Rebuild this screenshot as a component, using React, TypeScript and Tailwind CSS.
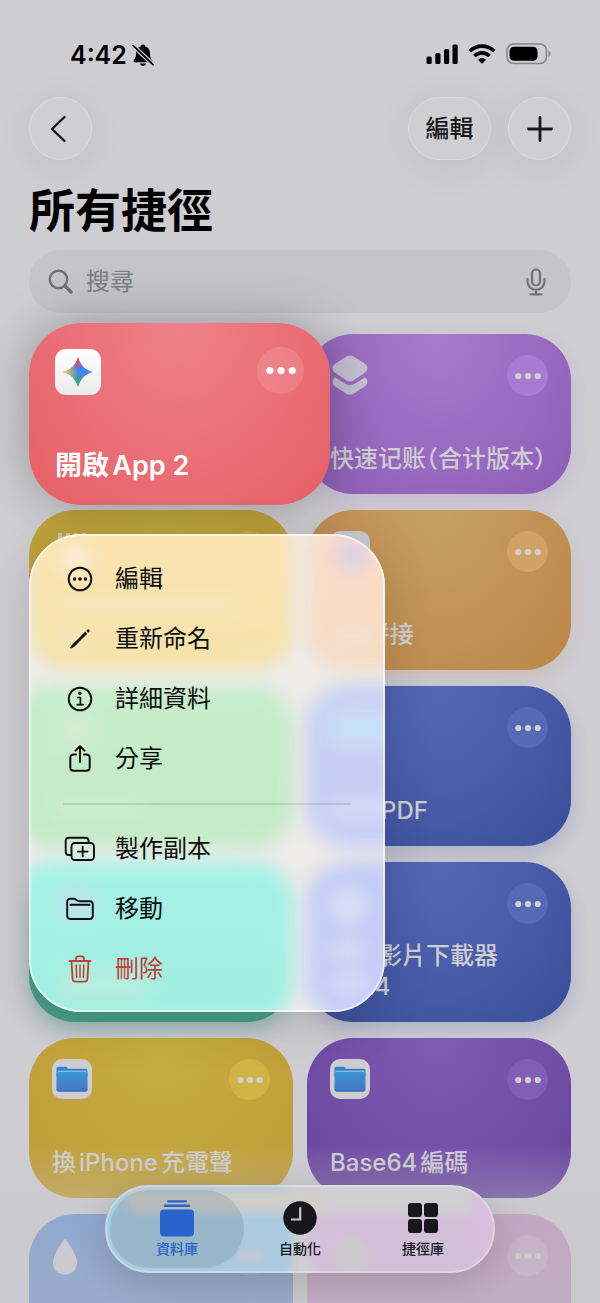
import type { ReactNode } from 'react';
import clsx from 'clsx';

type Shortcut = {
  id: string;
  title?: string;
  lang?: string;
  tone: string;
  more?: string;
  icon?: ReactNode;
};

type MenuItem = { label: string; icon: ReactNode; danger?: boolean };

const shortcuts: Shortcut[] = [
  {
    id: 'ledger',
    title: '快速记账（合计版本）',
    lang: 'zh-Hans',
    tone: 'bg-[radial-gradient(ellipse_at_top,#a67bcd,#9769bf_60%,#8b5cb4)] shadow-[0_8px_18px_rgba(151,105,191,0.16)]',
    more: 'bg-[#a87bd0]',
    icon: <LayersGlyph />,
  },
  {
    id: 'grid',
    tone: 'bg-[radial-gradient(ellipse_at_top,#c2ab3f,#bf9e38)]',
    more: 'bg-[#cdb044]',
    icon: <DotsGridGlyph />,
  },
  {
    id: 'stitch',
    title: 'A4拼接',
    tone: 'bg-[radial-gradient(ellipse_at_top,#c6a161,#c09055_60%,#bb8547)] shadow-[0_8px_18px_rgba(187,133,71,0.16)]',
    more: 'bg-[#cfa265]',
    icon: <span className="block size-10 rounded-[10px] bg-[#c9c8ce]" />,
  },
  { id: 'green', tone: 'bg-[#7bb07c]' },
  {
    id: 'pdf',
    title: '製作PDF',
    tone: 'bg-[radial-gradient(ellipse_at_top,#5468b5,#4559a6_60%,#3a4c98)] shadow-[0_8px_18px_rgba(58,76,152,0.2)]',
    more: 'bg-[#5569b5]',
  },
  { id: 'teal', tone: 'bg-[#489d88] shadow-[0_8px_18px_rgba(72,157,136,0.4)]' },
  {
    id: 'video',
    title: '下載影片下載器 Ver.4',
    tone: 'bg-[radial-gradient(ellipse_at_top,#5468b5,#4559a6_60%,#3a4c98)] shadow-[0_8px_18px_rgba(58,76,152,0.2)]',
    more: 'bg-[#5569b5]',
  },
  {
    id: 'charge',
    title: '換iPhone充電聲',
    tone: 'bg-[radial-gradient(ellipse_at_top,#c4b040,#c2a53b_50%,#c09a36)]',
    more: 'bg-[#d1b245]',
    icon: <FolderTile id="a" />,
  },
  {
    id: 'base64',
    title: 'Base64編碼',
    tone: 'bg-[radial-gradient(ellipse_at_top,#7f5bb3,#7450a9_50%,#68459c)]',
    more: 'bg-[#815db5]',
    icon: <FolderTile id="b" />,
  },
  { id: 'water', tone: 'bg-[linear-gradient(#6e95d2,#7d9ccb_50%)]', more: 'bg-white/10', icon: <DropGlyph /> },
  { id: 'pink', tone: 'bg-[linear-gradient(#c293bd,#c0a0c0_50%)]', more: 'bg-white/15' },
];

const menuTop: MenuItem[] = [
  { label: '編輯', icon: <EllipsisCircleIcon /> },
  { label: '重新命名', icon: <PencilIcon /> },
  { label: '詳細資料', icon: <InfoIcon /> },
  { label: '分享', icon: <ShareIcon /> },
];

const menuBottom: MenuItem[] = [
  { label: '製作副本', icon: <DuplicateIcon /> },
  { label: '移動', icon: <FolderIcon /> },
  { label: '刪除', icon: <TrashIcon />, danger: true },
];

const tabs = [
  { label: '資料庫', icon: <LibraryIcon />, active: true },
  { label: '自動化', icon: <ClockIcon />, active: false },
  { label: '捷徑庫', icon: <GalleryIcon />, active: false },
];

export default function App() {
  return (
    <div
      lang="zh-Hant"
      className="relative h-screen overflow-hidden bg-[#cecdd2] text-black font-[Inter,'Noto_Sans_CJK_TC',sans-serif] [text-autospace:normal]"
    >
      <StatusBar />
      <main className="px-[29px]">
        <header className="flex items-center gap-[17px]">
          <GlassButton label="返回" className="w-[63px] mr-auto">
            <svg viewBox="0 0 28 28" className="size-7" fill="none" stroke="currentColor" strokeWidth="2.4" strokeLinecap="round" strokeLinejoin="round">
              <path d="M17.500 2 5 14l12.500 12" />
            </svg>
          </GlassButton>
          <GlassButton className="w-[83px] text-2xl font-medium">編輯</GlassButton>
          <GlassButton label="新增捷徑" className="w-[63px]">
            <svg viewBox="0 0 28 28" className="size-7" fill="none" stroke="currentColor" strokeWidth="2.8" strokeLinecap="round">
              <path d="M14 2.500v23M2.500 14h23" />
            </svg>
          </GlassButton>
        </header>

        <h1 className="mt-5 text-[46px] leading-[60px] font-bold">所有捷徑</h1>

        <label className="mt-[10px] flex h-[63px] items-center rounded-full bg-[#c5c4c9] px-[19px] text-[#707075]">
          <SearchIcon />
          <input
            type="text"
            aria-label="搜尋"
            placeholder="搜尋"
            className="ml-3 min-w-0 flex-1 bg-transparent text-2xl outline-none placeholder:text-[#7c7c81]"
          />
          <button type="button" aria-label="聽寫" className="w-8 flex justify-center">
            <MicIcon />
          </button>
        </label>

        <ul className="mt-[21px] grid grid-cols-2 gap-x-[14px] gap-y-4">
          <li className="relative z-10 h-40">
            <FocusedCard />
            <ContextMenu />
          </li>
          {shortcuts.map((s) => (
            <ShortcutCard key={s.id} shortcut={s} />
          ))}
        </ul>
      </main>

      <div className="pointer-events-none absolute inset-x-0 bottom-0 h-[160px] bg-linear-to-b from-[#cecdd2]/0 via-[#c6c5ca]/40 via-40% to-[#c2c2c9]/40" />
      <TabBar />
    </div>
  );
}

function StatusBar() {
  return (
    <div className="flex h-[97px] items-center justify-between pl-[70px] pr-[49px] pt-[13px]">
      <div className="flex h-[84px] items-start gap-[5px] pt-[26px]">
        <span className="text-[25px] leading-8 font-semibold">4:42</span>
        <svg viewBox="0 0 22 24" className="mt-1 h-6 w-[22px]">
          <path d="M11 1.500c1.300 0 2.200.8 2.400 1.900 3 .9 4.600 3.600 4.600 6.800 0 4.300 1 5.600 2.200 7 .8 1 .2 2-1 2H2.800c-1.200 0-1.800-1-1-2C3 15.800 4 14.500 4 10.200c0-3.200 1.600-5.900 4.600-6.800.2-1.100 1.100-1.900 2.400-1.900z" />
          <path d="M8 20.600h6c-.3 1.500-1.500 2.400-3 2.400s-2.700-.9-3-2.400z" />
          <path d="M0 1.500 22 22.500" stroke="#cecdd2" strokeWidth="4.200" />
          <path d="M1.200 2.600 21 21.600" stroke="#000" strokeWidth="1.800" strokeLinecap="round" />
        </svg>
      </div>
      <div className="flex h-[84px] items-start gap-[10px] pt-[30px]">
        <svg viewBox="0 0 32 22" className="h-[22px] w-8">
          <rect x="0.500" y="13.500" width="5.200" height="7.500" rx="1.500" />
          <rect x="9.300" y="10" width="5.200" height="11" rx="1.500" />
          <rect x="18" y="6" width="5.200" height="15" rx="1.500" />
          <rect x="26.500" y="1.500" width="5.200" height="19.500" rx="1.500" />
        </svg>
        <svg viewBox="0 0 28 22" className="h-[22px] w-7" fill="none" stroke="#000" strokeWidth="3.600">
          <path d="M1.800 8.200a17.300 17.300 0 0 1 24.400 0" />
          <path d="M6.400 13a10.800 10.800 0 0 1 15.200 0" />
          <path d="M14 20.800l-4-4.100a5.700 5.700 0 0 1 8 0z" fill="#000" stroke="none" />
        </svg>
        <svg viewBox="0 0 45 22" className="h-[22px] w-[45px]">
          <rect x="1" y="1" width="39.500" height="19.500" rx="6.500" fill="none" stroke="#87868a" strokeWidth="1.600" />
          <rect x="3.500" y="3.700" width="28" height="14" rx="4.500" />
          <path d="M42.500 7.500c1.300.5 2 1.700 2 3.300s-.7 2.800-2 3.300z" fill="#87868a" />
        </svg>
      </div>
    </div>
  );
}

function GlassButton({ label, className, children }: { label?: string; className?: string; children: ReactNode }) {
  return (
    <button
      type="button"
      aria-label={label}
      className={clsx(
        'flex h-[63px] items-center justify-center rounded-full border border-[#dcdcdf] bg-[#cfcfd1] text-[#18181b] shadow-[0_6px_40px_rgba(0,0,0,0.07)]',
        className,
      )}
    >
      {children}
    </button>
  );
}

function ShortcutCard({ shortcut }: { shortcut: Shortcut }) {
  return (
    <li className={clsx('flex h-40 flex-col justify-between rounded-[46px] px-[23px] pt-[21px] pb-5', shortcut.tone)}>
      <div className="flex items-start justify-between">
        <div className="flex size-10 items-center justify-center">{shortcut.icon}</div>
        <button
          type="button"
          aria-label="更多"
          className={clsx('flex size-[41px] items-center justify-center rounded-full', shortcut.more)}
        >
          <MoreDots className="w-[26px] text-[#d0cfd4]" />
        </button>
      </div>
      {shortcut.title && (
        <h2
          lang={shortcut.lang}
          className={clsx(
            'text-2xl leading-[31px] font-medium text-[#cecdd2]',
            shortcut.lang && "whitespace-nowrap font-[Inter,'Noto_Sans_CJK_SC',sans-serif] [font-feature-settings:'halt']",
          )}
        >
          {shortcut.title}
        </h2>
      )}
    </li>
  );
}

function FocusedCard() {
  return (
    <article className="absolute -inset-y-[11px] left-0 -right-[37px] flex flex-col justify-between rounded-[52px] bg-[radial-gradient(ellipse_at_top,#f08189,#ea6d74_60%,#e65f66)] px-[26px] pt-6 pb-[23px] shadow-[0_0_50px_rgba(0,0,0,0.28)]">
      <div className="flex items-start justify-between">
        <div className="mt-[2px] flex size-[46px] items-center justify-center rounded-[11px] bg-linear-to-b from-white to-[#ebebeb]">
          <SparkIcon />
        </div>
        <button type="button" aria-label="更多" className="flex size-[47px] items-center justify-center rounded-full bg-white/12">
          <MoreDots className="w-[30px] text-white" />
        </button>
      </div>
      <h2 className="text-[27px] leading-8 font-semibold text-white">開啟App 2</h2>
    </article>
  );
}

function ContextMenu() {
  return (
    <div
      role="menu"
      className="absolute left-0 top-[200px] w-[356px] overflow-hidden rounded-[52px] bg-[#edebe9] pt-[15px] pb-[13px] shadow-[0_10px_50px_rgba(0,0,0,0.14)]"
    >
      <MenuBackdrop />
      <div className="relative">
        {menuTop.map((item) => (
          <MenuRow key={item.label} item={item} />
        ))}
        <hr className="mx-[34px] my-[14px] border-t-2 border-black/10" />
        {menuBottom.map((item) => (
          <MenuRow key={item.label} item={item} />
        ))}
      </div>
      <div className="pointer-events-none absolute inset-0 rounded-[52px] border-2 border-white/60" />
    </div>
  );
}

function MenuRow({ item }: { item: MenuItem }) {
  return (
    <button
      type="button"
      role="menuitem"
      className={clsx('flex h-[60px] w-full items-center gap-[15px] pl-[31px] text-2xl', item.danger ? 'text-[#c03d37]' : 'text-[#0c0c0c]')}
    >
      <span className="flex w-10 justify-center">{item.icon}</span>
      {item.label}
    </button>
  );
}

// Soft colour fields of the cards lying behind the menu glass
function MenuBackdrop() {
  return (
    <div aria-hidden className="absolute -top-6 left-0 grid w-[542px] grid-cols-2 gap-x-[14px] gap-y-4 blur-[9px]">
      <div className="h-40 rounded-[40px] bg-linear-to-b from-[#fce3b0] to-[#f4e3ab] pl-[28px] pt-[32px]">
        <div className="h-8 w-9 rounded-full bg-[#faebd2]" />
        <div className="mt-[26px] h-3 w-[180px] bg-[#f7e8c4]" />
        <div className="mt-5 h-3 w-5 bg-[#f7e9c2]" />
      </div>
      <div className="h-40 rounded-[40px] bg-linear-to-b from-[#fbdccb] to-[#f5dcc4] pl-[26px] pt-[30px]">
        <div className="h-7 w-9 rounded-full bg-linear-to-r from-[#e9cfe8] to-[#cfd2e6]" />
        <div className="mt-[60px] h-4 w-10 bg-[#f5e0d4]" />
      </div>
      <div className="-ml-5 h-40 rounded-[40px] bg-linear-to-b from-[#c6eecb] to-[#c2eac4] pl-[45px] pt-[26px]">
        <div className="h-9 w-10 bg-[#d2edd2]" />
        <div className="mt-[52px] h-4 w-[90px] bg-[#d0eed2]" />
      </div>
      <div className="h-40 rounded-[40px] bg-linear-to-br from-[#c6d0f2] to-[#c5cbf8] pl-[23px] pt-[22px]">
        <div className="h-10 w-16 border-y-8 border-[#d8dcf2] bg-[#c4e0fa]" />
        <div className="mt-[52px] h-5 w-16 bg-[#d6dcf6]" />
      </div>
      <div className="-ml-5 h-40 rounded-[40px] bg-linear-to-b from-[#a5f2e6] to-[#a0eee0] pl-[50px] pt-[26px]">
        <div className="h-8 w-9 rounded-lg bg-[#bfe3ee]" />
        <div className="mt-[50px] h-7 w-[90px] bg-[#b8eedf]" />
      </div>
      <div className="h-40 rounded-[40px] bg-linear-to-br from-[#c2cdf4] to-[#c9cdfa] pl-[23px] pt-[26px]">
        <div className="size-9 rounded-full bg-[#dae1f6]" />
        <div className="mt-4 h-5 w-9 bg-[#d4dcf6]" />
        <div className="mt-3 h-6 w-10 rounded-full bg-[#d6dbf8]" />
      </div>
    </div>
  );
}

function TabBar() {
  return (
    <nav className="absolute inset-x-0 bottom-[30px] z-20 flex justify-center">
      <div className="relative h-[88px] overflow-hidden rounded-full bg-[#d0cfd3] p-[5px] shadow-[0_8px_36px_rgba(0,0,0,0.16)]">
        <div aria-hidden className="absolute inset-0 blur-[4px]">
          <div className="absolute -left-2 -top-1 h-24 w-[196px] rounded-2xl bg-[#a9cadf]" />
          <div className="absolute left-5 top-1 h-6 w-[200px] rounded-full bg-[#d0cdcb]" />
          <div className="absolute left-[202px] top-[29px] h-16 w-48 rounded-3xl bg-[#d3bfd8]" />
          <div className="absolute -right-1 -top-1 h-24 w-7 bg-[#d5bfdb]" />
          <div className="absolute left-[228px] top-[52px] h-9 w-9 rounded-full bg-[#cdc8d0]" />
          <div className="absolute left-[131px] top-[66px] h-3 w-7 bg-[#c4c8d4]" />
        </div>
        <div className="relative flex h-full -space-x-[11px]">
          {tabs.map((tab) => (
            <a
              key={tab.label}
              href="#"
              aria-current={tab.active ? 'page' : undefined}
              className={clsx(
                'flex w-[134px] flex-col items-center rounded-full pt-[10px]',
                tab.active ? 'bg-[#55707a]/20 text-[#2862ca]' : 'text-[#17161b]',
              )}
            >
              <span className="flex h-9 items-center">{tab.icon}</span>
              <span className="mt-[3px] text-sm leading-5 font-medium">{tab.label}</span>
            </a>
          ))}
        </div>
        <div className="pointer-events-none absolute inset-0 rounded-full border-2 border-white/30" />
      </div>
    </nav>
  );
}

/* ---- glyphs ---- */

function MoreDots({ className }: { className?: string }) {
  return (
    <svg viewBox="0 0 26 8" className={className} fill="currentColor">
      <circle cx="3.300" cy="4" r="3.100" />
      <circle cx="13" cy="4" r="3.100" />
      <circle cx="22.700" cy="4" r="3.100" />
    </svg>
  );
}

function SparkIcon() {
  const star = 'M15 0c1.800 7.500 7.500 13.200 15 15-7.500 1.800-13.200 7.500-15 15C13.200 22.500 7.500 16.800 0 15 7.500 13.200 13.200 7.500 15 0z';
  return (
    <svg viewBox="0 0 30 30" className="size-[30px]">
      <defs>
        <radialGradient id="sparkRed" cx="0.450" cy="0" r="0.430">
          <stop offset="0.300" stopColor="#e8504b" />
          <stop offset="1" stopColor="#e8504b" stopOpacity="0" />
        </radialGradient>
        <radialGradient id="sparkYellow" cx="0" cy="0.500" r="0.500">
          <stop offset="0.200" stopColor="#f3c93b" />
          <stop offset="1" stopColor="#f3c93b" stopOpacity="0" />
        </radialGradient>
        <radialGradient id="sparkGreen" cx="0.420" cy="1" r="0.480">
          <stop offset="0.300" stopColor="#3fae62" />
          <stop offset="1" stopColor="#3fae62" stopOpacity="0" />
        </radialGradient>
      </defs>
      <path d={star} fill="#4285f4" />
      <path d={star} fill="url(#sparkGreen)" />
      <path d={star} fill="url(#sparkYellow)" />
      <path d={star} fill="url(#sparkRed)" />
    </svg>
  );
}

function LayersGlyph() {
  return (
    <svg viewBox="0 0 36 40" className="h-10 w-9 shrink-0" fill="#c6c1d2">
      <path d="M14.800 1.300c2-1.100 4.400-1.100 6.400 0l11.800 7.500c3.300 2.200 3.300 6.800 0 9L21.500 25.500c-2.200 1.300-4.800 1.300-7 0L3 17.800c-3.300-2.200-3.300-6.800 0-9z" />
      <path d="M3 22.300l10.300 6.500c3 1.600 6.400 1.600 9.400 0L33 22.300c3.200 2.200 3.200 6.700 0 8.900l-11.500 7.500c-2.200 1.200-4.800 1.200-7 0L3 31.200c-3.200-2.200-3.200-6.700 0-8.900z" />
    </svg>
  );
}

function DotsGridGlyph() {
  return (
    <svg viewBox="0 0 36 40" className="h-10 w-9" fill="#cbc8bd">
      <path d="M4 2h4v6H4zM12 2h4v6h-4zM20 2h4v6h-4zM28 2h4v6h-4z" />
    </svg>
  );
}

function FolderTile({ id }: { id: string }) {
  return (
    <span className="flex size-10 items-center justify-center rounded-[10px] bg-[#cdcdd2]">
      <svg viewBox="0 0 32 26" className="h-[26px] w-8">
        <defs>
          <linearGradient id={`folder-${id}`} x1="0" y1="0" x2="0" y2="1">
            <stop offset="0" stopColor="#3a93d6" />
            <stop offset="1" stopColor="#4478c2" />
          </linearGradient>
        </defs>
        <path d="M.5 3C.5 1.500 1.200.8 2.600.8h6.600c1 0 1.600.4 2.200 1.200l.6.800h17.400c1.400 0 2.100.8 2.100 2.100V10H.5z" fill="#2f85d0" />
        <path d="M1.600 4.600h28.800V9H1.600z" fill="#83bcd8" />
        <rect x="0.500" y="6" width="31" height="19.500" rx="2" fill={`url(#folder-${id})`} />
        <path d="M1 23.300c0 1.200.8 1.800 1.800 1.800h26.400c1 0 1.800-.6 1.800-1.800" fill="none" stroke="#2f6cc4" />
      </svg>
    </span>
  );
}

function DropGlyph() {
  return (
    <svg viewBox="0 0 26 36" className="-ml-[14px] mt-1 h-9 w-[26px] shrink-0" fill="#d0d0d3">
      <path d="M13 .5c.8 0 1.300.5 1.800 1.300C20 10 25 17 25 23.800 25 31 19.800 35.500 13 35.500S1 31 1 23.800C1 17 6 10 11.200 1.800 11.700 1 12.200.5 13 .5z" />
    </svg>
  );
}

function SearchIcon() {
  return (
    <svg viewBox="0 0 26 26" className="h-[26px] w-[26px] shrink-0" fill="none" stroke="currentColor">
      <circle cx="10.500" cy="10.500" r="8.700" strokeWidth="2.400" />
      <path d="M17 17l6.200 6.200" strokeWidth="3.200" strokeLinecap="round" />
    </svg>
  );
}

function MicIcon() {
  return (
    <svg viewBox="0 0 20 28" className="h-7 w-5" fill="none" stroke="currentColor" strokeWidth="2.200" strokeLinecap="round">
      <rect x="6" y="1.500" width="8" height="16" rx="4" />
      <path d="M1.500 11v2.500a8.500 8.500 0 0 0 17 0V11M10 22v4M4.500 26.300h11" />
    </svg>
  );
}

function EllipsisCircleIcon() {
  return (
    <svg viewBox="0 0 26 26" className="size-[26px]" fill="none" stroke="currentColor" strokeWidth="2">
      <circle cx="13" cy="13" r="11.300" />
      <g fill="currentColor" stroke="none">
        <circle cx="7.500" cy="13" r="1.800" />
        <circle cx="13" cy="13" r="1.800" />
        <circle cx="18.500" cy="13" r="1.800" />
      </g>
    </svg>
  );
}

function PencilIcon() {
  return (
    <svg viewBox="0 0 22 22" className="size-[22px]" fill="currentColor">
      <path d="M16.200 3.800 18.200 5.800 5 19 1.900 20.500c-.5.2-.9-.2-.7-.7L2.900 17z" />
      <path d="M17.200 2.800l1-1c.6-.6 1.300-.6 1.800-.1l.3.300c.5.500.5 1.200-.1 1.800l-1 1z" />
    </svg>
  );
}

function InfoIcon() {
  return (
    <svg viewBox="0 0 26 26" className="size-[26px]" fill="none" stroke="currentColor" strokeWidth="2" strokeLinecap="round">
      <circle cx="13" cy="13" r="11.300" />
      <circle cx="12.800" cy="7.300" r="1.700" fill="currentColor" stroke="none" />
      <path d="M10.800 11.500h2.600v7M10.200 18.700h6" strokeWidth="1.700" strokeLinejoin="round" />
    </svg>
  );
}

function ShareIcon() {
  return (
    <svg viewBox="0 0 24 30" className="h-[30px] w-6" fill="none" stroke="currentColor" strokeWidth="2" strokeLinecap="round" strokeLinejoin="round">
      <path d="M8 10.500H5.800c-2.300 0-3.500 1.200-3.500 3.500v9.300c0 2.300 1.200 3.500 3.500 3.500h12.400c2.300 0 3.500-1.200 3.500-3.500V14c0-2.300-1.200-3.500-3.500-3.500H16" />
      <path d="M12 18V2.500M7.500 6.600 12 2.200l4.500 4.400" />
    </svg>
  );
}

function DuplicateIcon() {
  return (
    <svg viewBox="0 0 32 26" className="h-[26px] w-8" fill="none" stroke="currentColor" strokeWidth="1.900" strokeLinecap="round" strokeLinejoin="round">
      <rect x="7.500" y="7" width="22.500" height="17" rx="3.500" />
      <path d="M7 19H5c-2.300 0-3.300-1.100-3.300-3.300V5c0-2.200 1-3.300 3.300-3.300h16.300c2.200 0 3.300 1.100 3.300 3.300v1.500" />
      <path d="M18.700 10.800v9.600M13.900 15.600h9.600" />
    </svg>
  );
}

function FolderIcon() {
  return (
    <svg viewBox="0 0 28 24" className="h-6 w-7" fill="none" stroke="currentColor" strokeWidth="1.900" strokeLinecap="round" strokeLinejoin="round">
      <path d="M1.200 5c0-2.200 1.100-3.200 3.200-3.200h3.200c1.100 0 1.700.2 2.500.9l.8.700c.7.600 1.200.8 2.200.8h10.500c2.100 0 3.200 1.100 3.200 3.200v11.400c0 2.100-1.100 3.200-3.200 3.200H4.400c-2.100 0-3.200-1.100-3.200-3.200z" />
      <path d="M4.500 7.800h19" strokeWidth="2" />
    </svg>
  );
}

function TrashIcon() {
  return (
    <svg viewBox="0 0 24 28" className="h-7 w-6" fill="none" stroke="currentColor" strokeWidth="1.800" strokeLinecap="round" strokeLinejoin="round">
      <path d="M1.500 6h21M8 5.800V3.800C8 2.300 8.900 1.300 10.400 1.300h3.200c1.500 0 2.400 1 2.400 2.500v2" />
      <path d="M3.500 6.200l1 17.300c.1 2.100 1.100 3.100 3.100 3.100h8.800c2 0 3-1 3.100-3.100l1-17.300" />
      <path d="M8.200 10l.4 12.500M12 10v12.500M15.800 10l-.4 12.500" strokeWidth="1.500" />
    </svg>
  );
}

function LibraryIcon() {
  return (
    <svg viewBox="0 0 34 38" className="h-[38px] w-[34px]" fill="currentColor">
      <rect x="7" y="1.300" width="20" height="2.200" rx="1.100" />
      <rect x="3.800" y="5.600" width="26.400" height="2.400" rx="1.200" />
      <rect x="0" y="10.500" width="34" height="27" rx="4" />
    </svg>
  );
}

function ClockIcon() {
  return (
    <svg viewBox="0 0 34 34" className="size-[34px]">
      <circle cx="17" cy="17" r="16.700" fill="currentColor" />
      <path d="M17.200 6.300v12.200H8" fill="none" stroke="#c9c8cd" strokeWidth="2.200" />
    </svg>
  );
}

function GalleryIcon() {
  return (
    <svg viewBox="0 0 32 32" className="size-8" fill="currentColor">
      <rect x="1" y="1" width="14" height="14" rx="3" />
      <rect x="17" y="1" width="14" height="14" rx="3" />
      <rect x="1" y="17" width="14" height="14" rx="3" />
      <rect x="17" y="17" width="14" height="14" rx="3" />
    </svg>
  );
}
